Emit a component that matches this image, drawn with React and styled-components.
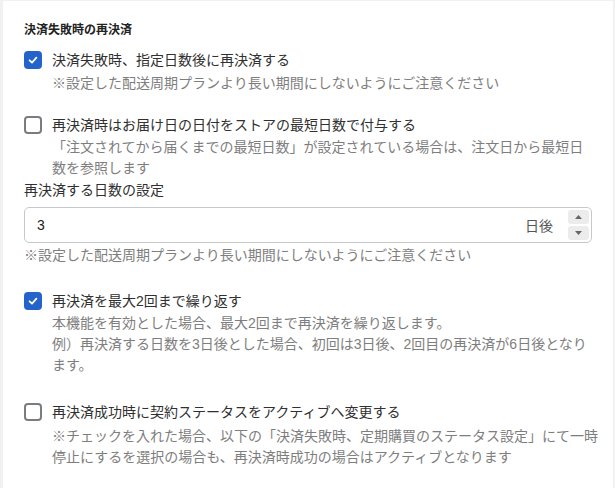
import React from 'react';
import styled, { createGlobalStyle } from 'styled-components';

const GlobalStyle = createGlobalStyle`
  html, body {
    margin: 0;
    padding: 0;
    background: #f1f1f1;
  }
  body {
    font-family: 'Liberation Sans', 'Noto Sans CJK JP', sans-serif;
    -webkit-font-smoothing: antialiased;
  }
`;

const Page = styled.div`
  padding: 1px 2px 0 3px;
  height: 488px;
  box-sizing: border-box;
`;

const Card = styled.section`
  background: #fff;
  height: 100%;
  box-sizing: border-box;
  padding: 20px 21px 0 21px;
`;

const Heading = styled.h3`
  margin: 0;
  font-size: 12px;
  line-height: 18px;
  font-weight: 700;
  color: #222;
`;

const Item = styled.div`
  margin-top: ${({ gap }) => gap}px;
`;

const CheckRow = styled.label`
  display: flex;
  align-items: center;
  gap: 10px;
  font-size: 14px;
  line-height: 22px;
  color: #303030;
`;

const Box = styled.span`
  flex: none;
  width: 18px;
  height: 18px;
  box-sizing: border-box;
  border-radius: 4px;
  display: flex;
  align-items: center;
  justify-content: center;
  background: ${({ checked }) => (checked ? '#2463c9' : '#fff')};
  border: ${({ checked }) => (checked ? 'none' : '2px solid #7a7d80')};
`;

const Help = styled.p`
  margin: ${({ top }) => top || 2}px 0 0 ${({ indent }) => (indent ? 28 : 0)}px;
  font-size: 14px;
  line-height: 21px;
  color: #7e7e7e;
  white-space: nowrap;
`;

const FieldLabel = styled.div`
  font-size: 14px;
  line-height: 22px;
  color: #303030;
`;

const InputWrap = styled.div`
  margin-top: 6px;
  height: 36px;
  box-sizing: border-box;
  border: 1px solid #c6c8cb;
  border-radius: 5px;
  display: flex;
  align-items: center;
  padding: 0 2px 0 12px;
`;

const Value = styled.div`
  flex: 1;
  font-size: 14px;
  color: #222;
`;

const Suffix = styled.span`
  font-size: 14px;
  color: #555;
  margin-right: 15px;
`;

const Spinner = styled.div`
  display: flex;
  flex-direction: column;
  gap: 2px;
`;

const SpinBtn = styled.div`
  width: 21px;
  height: 14px;
  background: #ececec;
  border-radius: 3px;
  display: flex;
  align-items: center;
  justify-content: center;
`;

const Check = ({ checked }) => (
  <Box checked={checked}>
    {checked && (
      <svg width="12" height="12" viewBox="0 0 12 12">
        <path d="M2.6 6.3 L5 8.6 L9.4 3.6" fill="none" stroke="#fff" strokeWidth="1.8" strokeLinecap="round" strokeLinejoin="round" />
      </svg>
    )}
  </Box>
);

const Tri = ({ up }) => (
  <svg width="7" height="4" viewBox="0 0 7 4">
    <path d={up ? 'M0 4 L3.5 0 L7 4 Z' : 'M0 0 L3.5 4 L7 0 Z'} fill="#666" />
  </svg>
);

const Option = ({ gap, checked, label, children }) => (
  <Item gap={gap}>
    <CheckRow>
      <Check checked={checked} />
      {label}
    </CheckRow>
    {children}
  </Item>
);

const App = () => (
  <>
    <GlobalStyle />
    <Page>
      <Card>
        <Heading>決済失敗時の再決済</Heading>

        <Option gap={10} checked label="決済失敗時、指定日数後に再決済する">
          <Help indent>※設定した配送周期プランより長い期間にしないようにご注意ください</Help>
        </Option>

        <Option gap={20} checked={false} label="再決済時はお届け日の日付をストアの最短日数で付与する">
          <Help indent top={1}>
            「注文されてから届くまでの最短日数」が設定されている場合は、注文日から最短日
            <br />
            数を参照します
          </Help>
        </Option>

        <FieldLabel>再決済する日数の設定</FieldLabel>
        <InputWrap>
          <Value>3</Value>
          <Suffix>日後</Suffix>
          <Spinner>
            <SpinBtn><Tri up /></SpinBtn>
            <SpinBtn><Tri /></SpinBtn>
          </Spinner>
        </InputWrap>
        <Help>※設定した配送周期プランより長い期間にしないようにご注意ください</Help>

        <Option gap={24} checked label="再決済を最大2回まで繰り返す">
          <Help indent top={1}>
            本機能を有効とした場合、最大2回まで再決済を繰り返します。
            <br />
            例）再決済する日数を3日後とした場合、初回は3日後、2回目の再決済が6日後となり
            <br />
            ます。
          </Help>
        </Option>

        <Option gap={25} checked={false} label="再決済成功時に契約ステータスをアクティブへ変更する">
          <Help indent top={3}>
            ※チェックを入れた場合、以下の「決済失敗時、定期購買のステータス設定」にて一時
            <br />
            停止にするを選択の場合も、再決済時成功の場合はアクティブとなります
          </Help>
        </Option>
      </Card>
    </Page>
  </>
);

export default App;
